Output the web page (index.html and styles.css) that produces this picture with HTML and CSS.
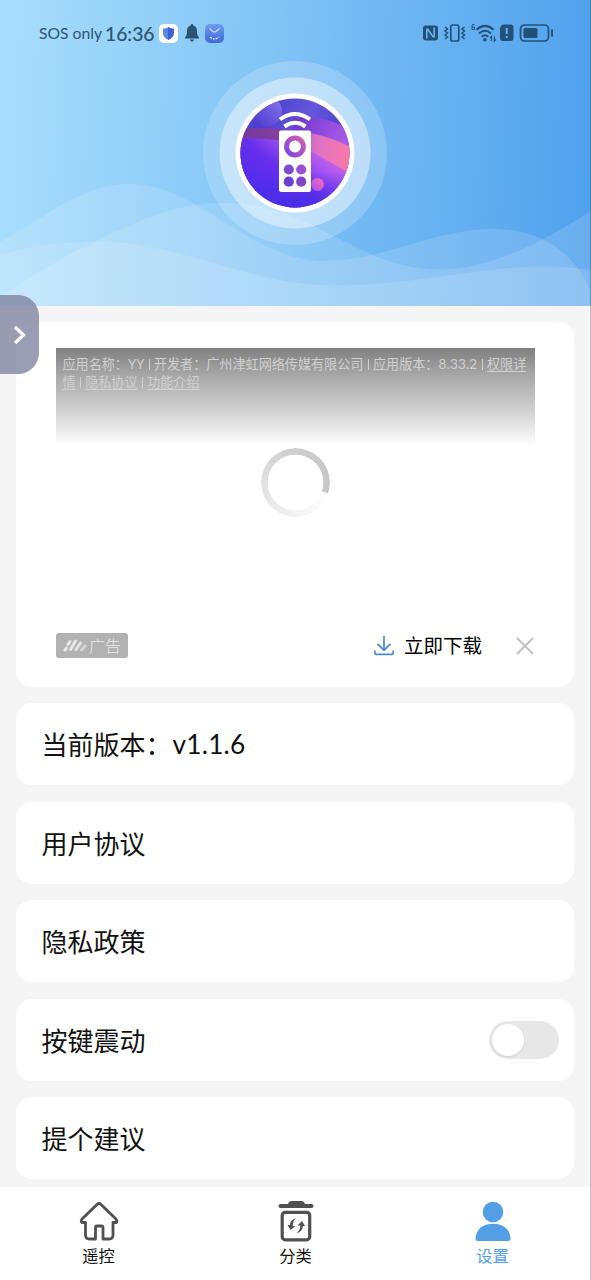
FILE: index.html
```html
<!DOCTYPE html>
<html lang="zh-CN">
<head>
<meta charset="utf-8">
<title>设置</title>
<link rel="stylesheet" href="styles.css">
</head>
<body>
<div class="screen">
  <header class="hero">
    <svg class="waves" viewBox="0 0 591 306" aria-hidden="true">
      <path d="M0 242C45 218 82 183.700 130 183.700C199 183.700 249 261 325 261C382 261 435 229 492 229C543 229 574 254 590 289V306H0Z"/>
      <path d="M0 298C38 272 64 256 94 242C140 219 181 202.700 222 202.700C316 202.700 354 269.500 440 269.500C489 269.500 543 242 591 211V306H0Z"/>
      <path d="M0 255C33 245 66 241.700 98 241.700C181 241.700 249 285.500 336 285.500C416 285.500 480 266.500 545 266.500C562 266.500 577 268 591 270V306H0Z"/>
    </svg>
    <div class="status">
      <div class="status-left">
        <span class="carrier">SOS only</span>
        <span class="clock">16:36</span>
        <svg class="chip" viewBox="0 0 19 19"><defs><linearGradient id="sh"><stop offset=".5" stop-color="#5c86ea"/><stop offset=".5" stop-color="#3d62d2"/></linearGradient><linearGradient id="mail" x2="0" y2="1"><stop stop-color="#6f9cf0"/><stop offset="1" stop-color="#3e6bd8"/></linearGradient></defs><rect width="19" height="19" rx="5" fill="#fff"/><path d="M9.500 3C11 4.200 13 4.500 15 4.600V9C15 12 13 14.500 9.500 16C6 14.500 4 12 4 9V4.600C6 4.500 8 4.200 9.500 3Z" fill="url(#sh)"/></svg>
        <svg class="bell" viewBox="0 0 16 18"><path d="M8 0C8.900 0 9.300.7 9.300 1.600C11.900 2.200 13 4.300 13 7C13 10.500 13.600 12 15 13.300V14.500H1V13.300C2.400 12 3 10.500 3 7C3 4.300 4.100 2.200 6.700 1.600C6.700.7 7.100 0 8 0ZM6 15.500H10C9.600 17 9 17.500 8 17.500S6.400 17 6 15.500Z" fill="#2c536f"/></svg>
        <svg class="chip" viewBox="0 0 19 19"><rect width="19" height="19" rx="5" fill="url(#mail)"/><path d="M4.500 4.500L8 7.500Q9.500 8.600 11 7.500L14.500 4.500" fill="none" stroke="#c9ddff" stroke-width="1.200"/><path d="M5 13.300Q9.500 16.300 14 13.300" fill="none" stroke="#d5e4ff" stroke-width="1.300" stroke-dasharray="2 1"/></svg>
      </div>
      <svg class="status-right" viewBox="0 0 131 20" fill="none" stroke="#215078">
        <path d="M3.500 2.500H13Q16 2.500 16 5V14.500Q16 17.500 13 17.500H3.500Q1 17.500 1 14.500V5Q1 2.500 3.500 2.500Z" fill="#215078" stroke="none"/>
        <path d="M4.800 15.500V7Q4.800 5.300 6 6.500L10.800 13.500Q12.200 14.700 12.200 13V4.500" stroke="#6cb4ee" stroke-width="1.600"/>
        <rect x="28.800" y="2" width="8" height="16" rx="1.800" stroke-width="1.700"/>
        <path d="M23 4L25.500 6L23 8L25.500 10L23 12L25.500 14L23 16M42.500 4L40 6L42.500 8L40 10L42.500 12L40 14L42.500 16" stroke-width="1.500"/>
        <path d="M52.500 1.500H50.500Q50 1.500 50 2.500V6.500H52.500V4H50" stroke-width="1"/>
        <path d="M54.500 6.800Q63 -1 71.500 6.800M57 10.500Q63 5 69 10.500M59.700 13.700Q63 10.800 66.300 13.700" stroke-width="2"/>
        <circle cx="62.900" cy="16.700" r="1.800" fill="#215078" stroke="none"/>
        <path d="M69.500 18V13.500L68 15M72.300 13.500V18L73.800 16.500" stroke-width="1.200"/>
        <path d="M80.500 1.500H88.500Q91.500 1.500 91.500 4.500V15Q91.500 18 88.500 18H81Q78 18 78 15V4.500Z" fill="#215078" stroke="none"/>
        <path d="M84.700 5V11M84.700 13V15" stroke="#6cb4ee" stroke-width="2"/>
        <rect x="98.500" y="2" width="28" height="16" rx="4" stroke-width="1.700"/>
        <rect x="101.500" y="5" width="14" height="10" rx="1.500" fill="#215078" stroke="none"/>
        <path d="M130 6.500V13.500" stroke-width="2"/>
      </svg>
    </div>
    <svg class="logo" viewBox="0 0 184 184">
      <defs>
        <linearGradient id="sky" x1="0" y1="0" x2="1" y2=".4"><stop stop-color="#5b4ae0"/><stop offset=".25" stop-color="#4b3dcc"/><stop offset=".6" stop-color="#6558dc"/><stop offset="1" stop-color="#3f38ca"/></linearGradient>
        <linearGradient id="violet" x1="0" y1=".3" x2="1" y2=".6"><stop stop-color="#7139cc"/><stop offset="1" stop-color="#b461f0"/></linearGradient>
        <linearGradient id="pink"><stop stop-color="#70389f"/><stop offset=".35" stop-color="#85409f"/><stop offset=".7" stop-color="#e073c8"/><stop offset="1" stop-color="#fa799d"/></linearGradient>
        <linearGradient id="base" x1=".15" y1=".9" x2=".95" y2=".3"><stop stop-color="#4c2df0"/><stop offset=".45" stop-color="#672eea"/><stop offset=".75" stop-color="#a855f3"/><stop offset="1" stop-color="#db6bdb"/></linearGradient>
        <linearGradient id="orb" x1="1" y1="0" x2="0" y2="1"><stop stop-color="#fa70b3"/><stop offset="1" stop-color="#a64df0"/></linearGradient>
        <linearGradient id="ball" x1="1" y1="0" x2="0" y2="1"><stop stop-color="#8a77ef"/><stop offset="1" stop-color="#4935ca"/></linearGradient>
        <linearGradient id="ring" x1="1" y1="0" x2="0" y2="1"><stop stop-color="#d55fae"/><stop offset="1" stop-color="#7c46df"/></linearGradient>
        <linearGradient id="shade" x2="0" y2="1"><stop stop-color="#482ee6" stop-opacity="0"/><stop offset="1" stop-color="#482ee6"/></linearGradient>
        <clipPath id="disc"><circle cx="92" cy="92" r="54.500"/></clipPath>
      </defs>
      <circle cx="92" cy="92" r="92" fill="#fff" opacity=".2"/>
      <circle cx="92" cy="92" r="75.500" fill="#fff" opacity=".42"/>
      <circle cx="92" cy="92" r="59.500" fill="#fff"/>
      <g clip-path="url(#disc)">
        <path d="M36 36H148V148H36Z" fill="url(#sky)"/>
        <circle cx="63.500" cy="50" r="15.500" fill="url(#ball)"/>
        <path d="M90 57C115 54 132 60 150 70V110H90Z" fill="url(#violet)"/>
        <path d="M36 67C80 66 125 71 150 88V130H36Z" fill="url(#pink)"/>
        <path d="M36 77C70 78 85 78 107 90C125 100 138 107 150 114V150H36Z" fill="url(#base)"/>
        <path d="M36 110H150V150H36Z" fill="url(#shade)"/>
        <circle cx="114.500" cy="123.500" r="6.500" fill="url(#orb)"/>
      </g>
      <path d="M77 58.500Q92 47.500 107 58.500M81.500 65.500Q92 58 102.500 65.500" fill="none" stroke="#fff" stroke-width="4"/>
      <rect x="76" y="69.500" width="32" height="61.500" rx="2" fill="#fff"/>
      <circle cx="92" cy="85.500" r="8.400" fill="none" stroke="url(#ring)" stroke-width="5"/>
      <circle cx="85.800" cy="108.500" r="5.100" fill="#7c4bcf"/><circle cx="98.200" cy="108.500" r="5.100" fill="#9a50d2"/>
      <circle cx="85.800" cy="120.700" r="5.100" fill="#6840d4"/><circle cx="98.200" cy="120.700" r="5.100" fill="#8045cd"/>
    </svg>
  </header>

  <main class="list">
    <section class="ad">
      <div class="ad-media">
        <p class="ad-info">应用名称：<span class="lat">YY</span><i class="bar"></i>开发者：广州津虹网络传媒有限公司<i class="bar"></i>应用版本：<span class="lat ver">8.33.2</span><i class="bar"></i><u>权限详</u><br><u>情</u><i class="bar"></i><u>隐私协议</u><i class="bar"></i><u>功能介绍</u></p>
        <div class="spinner"></div>
      </div>
      <div class="ad-foot">
        <span class="ad-tag"><svg viewBox="0 0 24 16" width="24" height="16" fill="none" stroke="#e9e9e9" stroke-width="3" stroke-linecap="round"><path d="M2 13L3.500 11M5 7.500L7 4.500M7.500 12.500L12.500 4"/><path d="M13 12.500L17.500 6" opacity=".9"/><path d="M18.500 13L22 9" opacity=".6"/></svg>广告</span>
        <span class="download"><svg viewBox="0 0 22 22" width="22" height="22" fill="none" stroke="#4d86cf" stroke-width="1.700"><path d="M11 2V16M4.500 9.800L11 16.200L17.500 9.800M1.800 16.500V18.500Q1.800 20.300 3.500 20.300H18.500Q20.200 20.300 20.200 18.500V16.500"/></svg>立即下载</span>
        <svg class="close" viewBox="0 0 18 18" fill="none" stroke="#bfbfbf" stroke-width="2"><path d="M1 1L17 17M17 1L1 17"/></svg>
      </div>
    </section>
    <div class="row">当前版本：<span class="lat version">v1.1.6</span></div>
    <div class="row">用户协议</div>
    <div class="row">隐私政策</div>
    <div class="row">按键震动<span class="switch"><span class="knob"></span></span></div>
    <div class="row">提个建议</div>
  </main>

  <nav class="tabs">
    <div class="tab">
      <svg viewBox="0 0 40 42" fill="none" stroke="#505052" stroke-width="2.800" stroke-linejoin="round"><path d="M20 3.500Q21 3.500 22 4.500L37 19Q38.500 21 37.500 22.500H34V35Q34 39 30 39H24V27.500Q24 26 22.500 26H18Q16.500 26 16.500 27.500V39H10.500Q6.500 39 6.500 35V22.500H3Q1.500 21 3 19L18 4.500Q19 3.500 20 3.500Z"/></svg>
      <span>遥控</span>
    </div>
    <div class="tab">
      <svg viewBox="0 0 40 42"><path d="M4.500 4H12Q13 1 15.500 1H25.500Q28 1 29 4H35.500Q37.500 4 37.500 6T35.500 8H4.500Q2.500 8 2.500 6T4.500 4Z" fill="#505052"/><rect x="6.200" y="12.300" width="27.500" height="27.500" rx="3" fill="none" stroke="#505052" stroke-width="3.200"/><path d="M20 18Q16.500 21.500 16.800 26H19.500L14.500 30L11.500 25H14Q14 20 20 18ZM20.500 33.500Q24.500 29.500 24.300 25.500H21.500L26 21L29 26H26.800Q26.500 31.500 20.500 33.500Z" fill="#505052"/></svg>
      <span>分类</span>
    </div>
    <div class="tab active">
      <svg viewBox="0 0 40 42" fill="#539fe5"><circle cx="20" cy="12" r="10.300"/><path d="M2.500 38.500C3 29 10 23.800 20 23.800S37 29 37.500 38.500Q37.500 41 35 41H5Q2.500 41 2.500 38.500Z"/></svg>
      <span>设置</span>
    </div>
  </nav>

  <div class="drawer"><svg viewBox="0 0 14 20" width="14" height="20"><path d="M2 2L10.500 10L2 18" fill="none" stroke="#fff" stroke-width="3.200"/></svg></div>
  <div class="edge"></div>
</div>
</body>
</html>
```

FILE: styles.css
```css
* { box-sizing: border-box; }
body {
  margin: 0;
  font-family: "Noto Sans CJK SC", sans-serif;
  color: #111;
}
.screen {
  position: relative;
  width: 591px;
  height: 1280px;
  overflow: hidden;
  display: flex;
  flex-direction: column;
  background: #f5f5f5;
}
.hero {
  position: relative;
  height: 306px;
  flex: none;
  padding-right: 1px;
  display: flex;
  flex-direction: column;
  align-items: center;
  background: linear-gradient(92deg, #a9defc 0%, #84c6f6 42%, #51a2ed 98%);
}
.waves { position: absolute; inset: 0; width: 591px; height: 306px; fill: rgba(255, 255, 255, .14); }
.status {
  position: relative;
  width: 100%;
  height: 60.500px;
  padding: 6px 37px 0 39px;
  display: flex;
  align-items: center;
  justify-content: space-between;
  color: #2c536f;
}
.status-left { display: flex; align-items: center; font-family: Lato, sans-serif; }
.carrier { width: 66px; font-size: 15.700px; white-space: nowrap; }
.clock { width: 54px; font-size: 19.300px; font-weight: 400; -webkit-text-stroke: .2px #2c536f; }
.chip { width: 19px; height: 19px; }
.bell { width: 16px; height: 18px; margin: 0 5px 0 6px; }
.status-right { width: 131px; height: 20px; }
.logo { position: relative; width: 184px; height: 184px; }
.list {
  flex: 1;
  min-height: 0;
  padding: 16px 17px 0 16px;
  display: flex;
  flex-direction: column;
  gap: 16.400px;
}
.ad {
  height: 365px;
  flex: none;
  padding: 26px 39px 0 40px;
  background: #fff;
  border-radius: 16px;
}
.ad-media {
  height: 270px;
  display: flex;
  flex-direction: column;
  align-items: center;
  background: linear-gradient(#808080, #a8a8a8 28px, #d0d0d0 62px, #fff 98px);
}
.ad-info {
  width: 100%;
  height: 100px;
  margin: 0;
  padding: 7px 0 0 6.500px;
  font-size: 13.100px;
  line-height: 18px;
  color: #d0d0d0;
  white-space: nowrap;
}
.ad-info u { text-underline-offset: 2px; text-decoration-thickness: 1px; }
.lat { font-family: Lato, sans-serif; }
.ver { font-size: 13.500px; letter-spacing: .2px; }
.bar { display: inline-block; width: 1px; height: 11px; margin: 0 4.300px; background: #d0d0d0; vertical-align: -1px; }
.spinner {
  width: 69px;
  height: 69px;
  border-radius: 50%;
  background: conic-gradient(#cdcdcd 0deg, #c6c6c6 108deg, #fefefe 109deg, #f3f3f3 180deg, #e2e2e2 260deg, #cdcdcd 360deg);
  -webkit-mask: radial-gradient(circle, transparent 27.500px, #000 28.200px);
  mask: radial-gradient(circle, transparent 27.500px, #000 28.200px);
}
.ad-foot { height: 55px; display: flex; align-items: center; }
.ad-tag {
  width: 72px;
  height: 25px;
  padding: 0 0 1px 7px;
  display: flex;
  align-items: center;
  gap: 2px;
  border-radius: 3px;
  background: #b2b2b2;
  color: #ededed;
  font-size: 16px;
  font-weight: 300;
}
.download { margin-left: auto; padding-bottom: 2px; display: flex; align-items: center; gap: 9px; font-size: 19.500px; color: #000; }
.close { width: 18px; height: 18px; margin-left: 34px; margin-right: 1px; }
.row {
  height: 82px;
  flex: none;
  padding: 0 15px 1px 25.500px;
  display: flex;
  align-items: center;
  background: #fff;
  border-radius: 16px;
  font-size: 26px;
}
.version { font-size: 26.300px; letter-spacing: .2px; padding-left: 1px; }
.switch { width: 70px; height: 38px; margin: 1px 0 0 auto; padding: 3px; border-radius: 19px; background: #e7e7e7; }
.knob { display: block; width: 32px; height: 32px; border-radius: 50%; background: #fff; box-shadow: 0 1px 2px rgba(0, 0, 0, .1); }
.tabs { height: 93px; flex: none; display: grid; grid-template-columns: repeat(3, 1fr); background: #fff; color: #111; }
.tab { padding-top: 13px; display: flex; flex-direction: column; align-items: center; font-size: 16.300px; line-height: 24px; }
.tab svg { width: 40px; height: 42px; margin-bottom: 1px; }
.active { color: #539fe5; }
.drawer {
  position: absolute;
  left: 0;
  top: 295px;
  width: 39px;
  height: 79px;
  padding: 0 0 0 1px;
  display: flex;
  align-items: center;
  justify-content: center;
  border-radius: 0 21px 21px 0;
  background: rgba(125, 129, 157, .78);
}
.edge { position: absolute; top: 0; right: 0; width: 1px; height: 1280px; background: rgba(0, 0, 0, .22); }
```
